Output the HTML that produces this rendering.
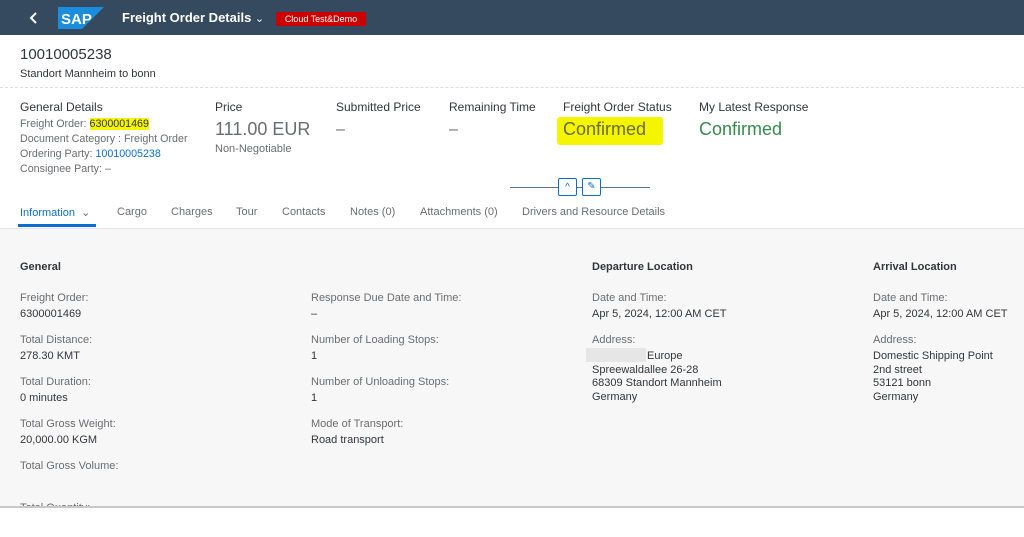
<!DOCTYPE html>
<html><head><style>
*{margin:0;padding:0;box-sizing:border-box}
body{width:1024px;height:537px;overflow:hidden;background:#fff;font-family:"Liberation Sans",Arial,sans-serif;color:#32363a;position:relative}
.a{position:absolute;white-space:nowrap}
.s{font-size:11px;color:#6a6d70}
.v{font-size:11px;color:#32363a}
.h{font-size:12px;color:#32363a}
.hl{background:#f5f500}
</style></head><body>
<div class="a" style="left:0;top:0;width:1024px;height:35px;background:#354a5f"></div>
<svg class="a" style="left:29px;top:11px" width="10" height="14"><path d="M7 2 L2 7 L7 12" stroke="#fff" stroke-width="2" fill="none"/></svg>
<svg class="a" style="left:58px;top:7px" width="46" height="22"><polygon points="0,0 46,0 24,22 0,22" fill="#1a8ddc"/><text x="3" y="17" font-family="Liberation Sans" font-weight="bold" font-size="15" fill="#fff">SAP</text></svg>
<div class="a" style="left:122px;top:10px;color:#fff;font-size:13px;font-weight:bold">Freight Order Details <span style="font-weight:normal;font-size:11px">&#8964;</span></div>
<div class="a" style="left:276px;top:12px;width:90px;height:14px;background:#c00;border-radius:2px;color:#fff;font-size:9px;text-align:center;line-height:14px">Cloud Test&amp;Demo</div>
<div class="a" style="left:20px;top:46px;font-size:15px">10010005238</div>
<div class="a" style="left:20px;top:68px;font-size:11px">Standort Mannheim to bonn</div>
<div class="a" style="left:0;top:87px;width:1024px;border-top:1px dashed #ddd"></div>
<div class="a h" style="left:20px;top:100px">General Details</div>
<div class="a s" style="left:20px;top:117px;line-height:15px;font-size:10.7px">Freight Order: <span class="hl" style="color:#32363a">6300001469</span><br>Document Category : Freight Order<br>Ordering Party: <span style="color:#0a6ed1">10010005238</span><br>Consignee Party: –</div>
<div class="a h" style="left:215px;top:100px">Price</div>
<div class="a" style="left:215px;top:119px;font-size:18px;color:#6a6d70">111.00 EUR</div>
<div class="a s" style="left:215px;top:143px">Non-Negotiable</div>
<div class="a h" style="left:336px;top:100px">Submitted Price</div>
<div class="a" style="left:336px;top:121px;color:#6a6d70">–</div>
<div class="a h" style="left:449px;top:100px">Remaining Time</div>
<div class="a" style="left:449px;top:121px;color:#6a6d70">–</div>
<div class="a h" style="left:563px;top:100px">Freight Order Status</div>
<div class="a hl" style="left:557px;top:117px;width:106px;height:28px;border-radius:3px"></div>
<div class="a" style="left:563px;top:119px;font-size:18px;color:#6b6b2a">Confirmed</div>
<div class="a h" style="left:699px;top:100px">My Latest Response</div>
<div class="a" style="left:699px;top:119px;font-size:18px;color:#358a4d">Confirmed</div>
<div class="a" style="left:510px;top:187px;width:140px;height:1px;background:#5b738b"></div>
<div class="a" style="left:558px;top:178px;width:19px;height:18px;border:1px solid #0a6ed1;background:#fff;border-radius:2px;font-size:10px;color:#0a6ed1;text-align:center;line-height:18px">^</div>
<div class="a" style="left:582px;top:178px;width:19px;height:18px;border:1px solid #0a6ed1;background:#fff;border-radius:2px;font-size:10px;color:#0a6ed1;text-align:center;line-height:16px">✎</div>
<div class="a" style="top:206px;left:20px;font-size:11px;color:#0a6ed1">Information &nbsp;<span style="color:#6a6d70">&#8964;</span></div>
<div class="a" style="left:18px;top:224px;width:78px;height:3px;background:#0a6ed1"></div>
<div class="a s" style="top:206px;left:117px">Cargo</div>
<div class="a s" style="top:206px;left:171px">Charges</div>
<div class="a s" style="top:206px;left:236px">Tour</div>
<div class="a s" style="top:206px;left:282px">Contacts</div>
<div class="a s" style="top:206px;left:350px">Notes (0)</div>
<div class="a s" style="top:206px;left:420px">Attachments (0)</div>
<div class="a s" style="top:206px;left:522px">Drivers and Resource Details</div>
<div class="a" style="left:0;top:228px;width:1024px;height:280px;background:#f7f7f7;border-top:1px solid #e5e5e5;border-bottom:2px solid #c8c8c8;overflow:hidden">
<div class="a" style="left:20px;top:32px;font-size:11px;font-weight:bold">General</div>
<div class="a" style="left:592px;top:32px;font-size:11px;font-weight:bold">Departure Location</div>
<div class="a" style="left:873px;top:32px;font-size:11px;font-weight:bold">Arrival Location</div>
<div class="a s" style="left:20px;top:63px">Freight Order:</div><div class="a v" style="left:20px;top:79px">6300001469</div>
<div class="a s" style="left:20px;top:105px">Total Distance:</div><div class="a v" style="left:20px;top:121px">278.30 KMT</div>
<div class="a s" style="left:20px;top:147px">Total Duration:</div><div class="a v" style="left:20px;top:163px">0 minutes</div>
<div class="a s" style="left:20px;top:189px">Total Gross Weight:</div><div class="a v" style="left:20px;top:205px">20,000.00 KGM</div>
<div class="a s" style="left:20px;top:231px">Total Gross Volume:</div>
<div class="a s" style="left:20px;top:273px">Total Quantity:</div>
<div class="a s" style="left:311px;top:63px">Response Due Date and Time:</div><div class="a v" style="left:311px;top:79px">–</div>
<div class="a s" style="left:311px;top:105px">Number of Loading Stops:</div><div class="a v" style="left:311px;top:121px">1</div>
<div class="a s" style="left:311px;top:147px">Number of Unloading Stops:</div><div class="a v" style="left:311px;top:163px">1</div>
<div class="a s" style="left:311px;top:189px">Mode of Transport:</div><div class="a v" style="left:311px;top:205px">Road transport</div>
<div class="a s" style="left:592px;top:63px">Date and Time:</div><div class="a v" style="left:592px;top:79px">Apr 5, 2024, 12:00 AM CET</div>
<div class="a s" style="left:592px;top:105px">Address:</div>
<div class="a" style="left:586px;top:119px;width:60px;height:14px;background:#e6e6e6"></div>
<div class="a v" style="left:592px;top:121px;line-height:13.5px"><span style="padding-left:55px">Europe</span><br>Spreewaldallee 26-28<br>68309 Standort Mannheim<br>Germany</div>
<div class="a s" style="left:873px;top:63px">Date and Time:</div><div class="a v" style="left:873px;top:79px">Apr 5, 2024, 12:00 AM CET</div>
<div class="a s" style="left:873px;top:105px">Address:</div>
<div class="a v" style="left:873px;top:121px;line-height:13.5px">Domestic Shipping Point<br>2nd street<br>53121 bonn<br>Germany</div>
</div>
</body></html>
